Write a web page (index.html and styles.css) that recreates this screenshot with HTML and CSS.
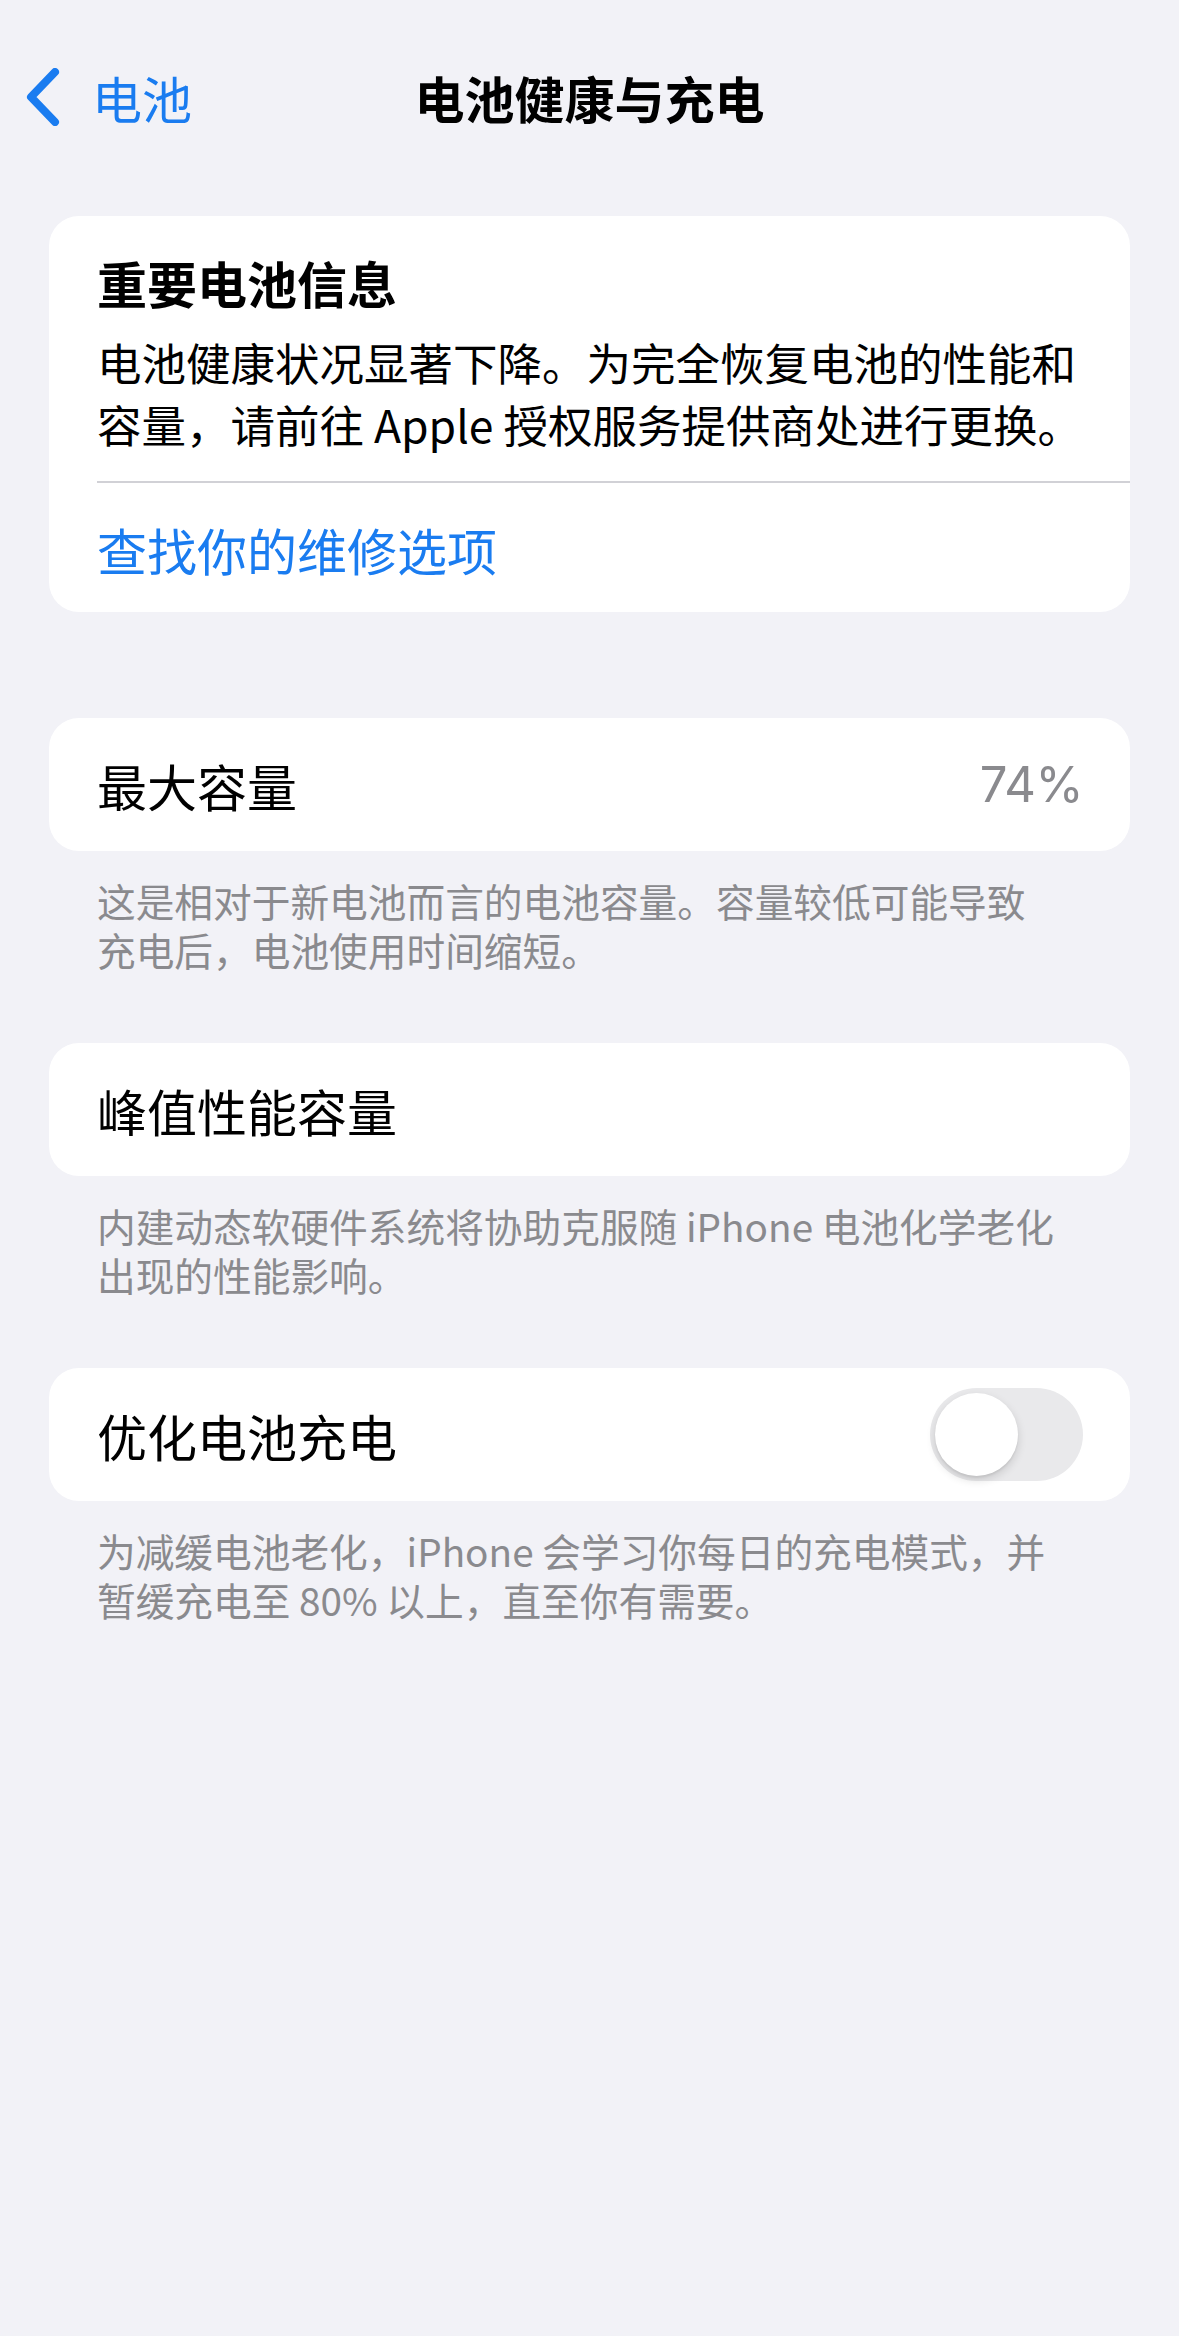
FILE: index.html
```html
<!DOCTYPE html>
<html lang="zh-CN">
<head>
<meta charset="utf-8">
<title>电池健康与充电</title>
<link rel="stylesheet" href="styles.css">
</head>
<body>
<div class="screen">
  <header class="navbar">
    <a class="back" href="#">
      <svg class="chevron" viewBox="0 0 36 58" width="36" height="58" aria-hidden="true">
        <path d="M30 4 L6 29 L30 54" fill="none" stroke="currentColor" stroke-width="8" stroke-linecap="round" stroke-linejoin="round"/>
      </svg>
      <span class="back-label">电池</span>
    </a>
    <h1 class="nav-title">电池健康与充电</h1>
    <div class="nav-spacer"></div>
  </header>

  <main class="content">
    <section class="group group-first">
      <div class="card">
        <div class="notice">
          <h2 class="notice-title">重要电池信息</h2>
          <p class="notice-text">电池健康状况显著下降。为完全恢复电池的性能和<br>容量，请前往 Apple 授权服务提供商处进行更换。</p>
        </div>
        <div class="separator"></div>
        <a class="link-row" href="#">查找你的维修选项</a>
      </div>
    </section>

    <section class="group group-second">
      <div class="card row">
        <span class="row-label">最大容量</span>
        <span class="row-value">74%</span>
      </div>
      <p class="footer"><span class="footer-line">这是相对于新电池而言的电池容量。容量较低可能导致</span><span class="footer-line">充电后，电池使用时间缩短。</span></p>
    </section>

    <section class="group">
      <div class="card row">
        <span class="row-label">峰值性能容量</span>
      </div>
      <p class="footer"><span class="footer-line">内建动态软硬件系统将协助克服随 iPhone 电池化学老化</span><span class="footer-line">出现的性能影响。</span></p>
    </section>

    <section class="group">
      <div class="card row">
        <span class="row-label">优化电池充电</span>
        <span class="switch" role="switch" aria-checked="false"><span class="knob"></span></span>
      </div>
      <p class="footer"><span class="footer-line">为减缓电池老化，iPhone 会学习你每日的充电模式，并</span><span class="footer-line">暂缓充电至 80% 以上，直至你有需要。</span></p>
    </section>
  </main>
</div>
</body>
</html>
```

FILE: styles.css
```css
html, body {
  margin: 0;
  padding: 0;
  background: #f2f2f7;
}

body {
  font-family: "Noto Sans CJK SC", "Noto Sans", sans-serif;
  color: #000;
  -webkit-font-smoothing: antialiased;
}

.screen {
  width: 1179px;
  min-height: 2336px;
}

/* navigation bar */
.navbar {
  display: grid;
  grid-template-columns: 1fr auto 1fr;
  align-items: center;
  height: 194px;
}

.back {
  display: flex;
  align-items: center;
  gap: 31px;
  padding-left: 25px;
  color: #1a7cf0;
  text-decoration: none;
}

.chevron {
  display: block;
  width: 36px;
  height: 58px;
}

.back-label {
  font-size: 50px;
  line-height: 60px;
  font-weight: 400;
}

.nav-title {
  margin: 0;
  font-size: 50px;
  line-height: 60px;
  font-weight: 700;
}

/* grouped content */
.content {
  padding: 0 49px;
  display: flex;
  flex-direction: column;
}

.group {
  margin-top: 69px;
}

.group-first {
  margin-top: 22px;
}

.group-second {
  margin-top: 106px;
}

.card {
  background: #fff;
  border-radius: 30px;
  overflow: hidden;
}

.notice {
  padding: 35px 48px 26px;
}

.notice-title {
  margin: 0;
  font-size: 50px;
  line-height: 62px;
  font-weight: 700;
}

.notice-text {
  margin: 18px 0 0;
  font-size: 44.5px;
  line-height: 62px;
  font-weight: 400;
  white-space: nowrap;
}

.separator {
  height: 2px;
  margin-left: 48px;
  background: #d1d1d6;
}

.link-row {
  display: block;
  padding: 36px 48px 33px;
  font-size: 50px;
  line-height: 60px;
  color: #1a7cf0;
  text-decoration: none;
}

.row {
  height: 133px;
  box-sizing: border-box;
  padding: 0 47px 0 48px;
  display: flex;
  align-items: center;
  justify-content: space-between;
}

.row-label {
  font-size: 50px;
  line-height: 60px;
}

.row-value {
  font-family: "Inter", "Noto Sans", sans-serif;
  font-size: 49px;
  line-height: 60px;
  letter-spacing: -0.5px;
  color: #8a8a8e;
}

/* toggle switch, off state */
.switch {
  display: flex;
  align-items: center;
  width: 153px;
  height: 93px;
  box-sizing: border-box;
  padding: 0 5px;
  border-radius: 47px;
  background: #e9e9eb;
}

.knob {
  width: 83px;
  height: 83px;
  border-radius: 50%;
  background: #fff;
  box-shadow: 0 4px 10px rgba(0, 0, 0, 0.14), 0 2px 2px rgba(0, 0, 0, 0.06);
}

.footer {
  display: flex;
  flex-direction: column;
  margin: 25px 0 0 48px;
  font-size: 38.7px;
  color: #8a8a8e;
  white-space: nowrap;
}

.footer-line {
  display: block;
  height: 49px;
  line-height: 49px;
}
```
